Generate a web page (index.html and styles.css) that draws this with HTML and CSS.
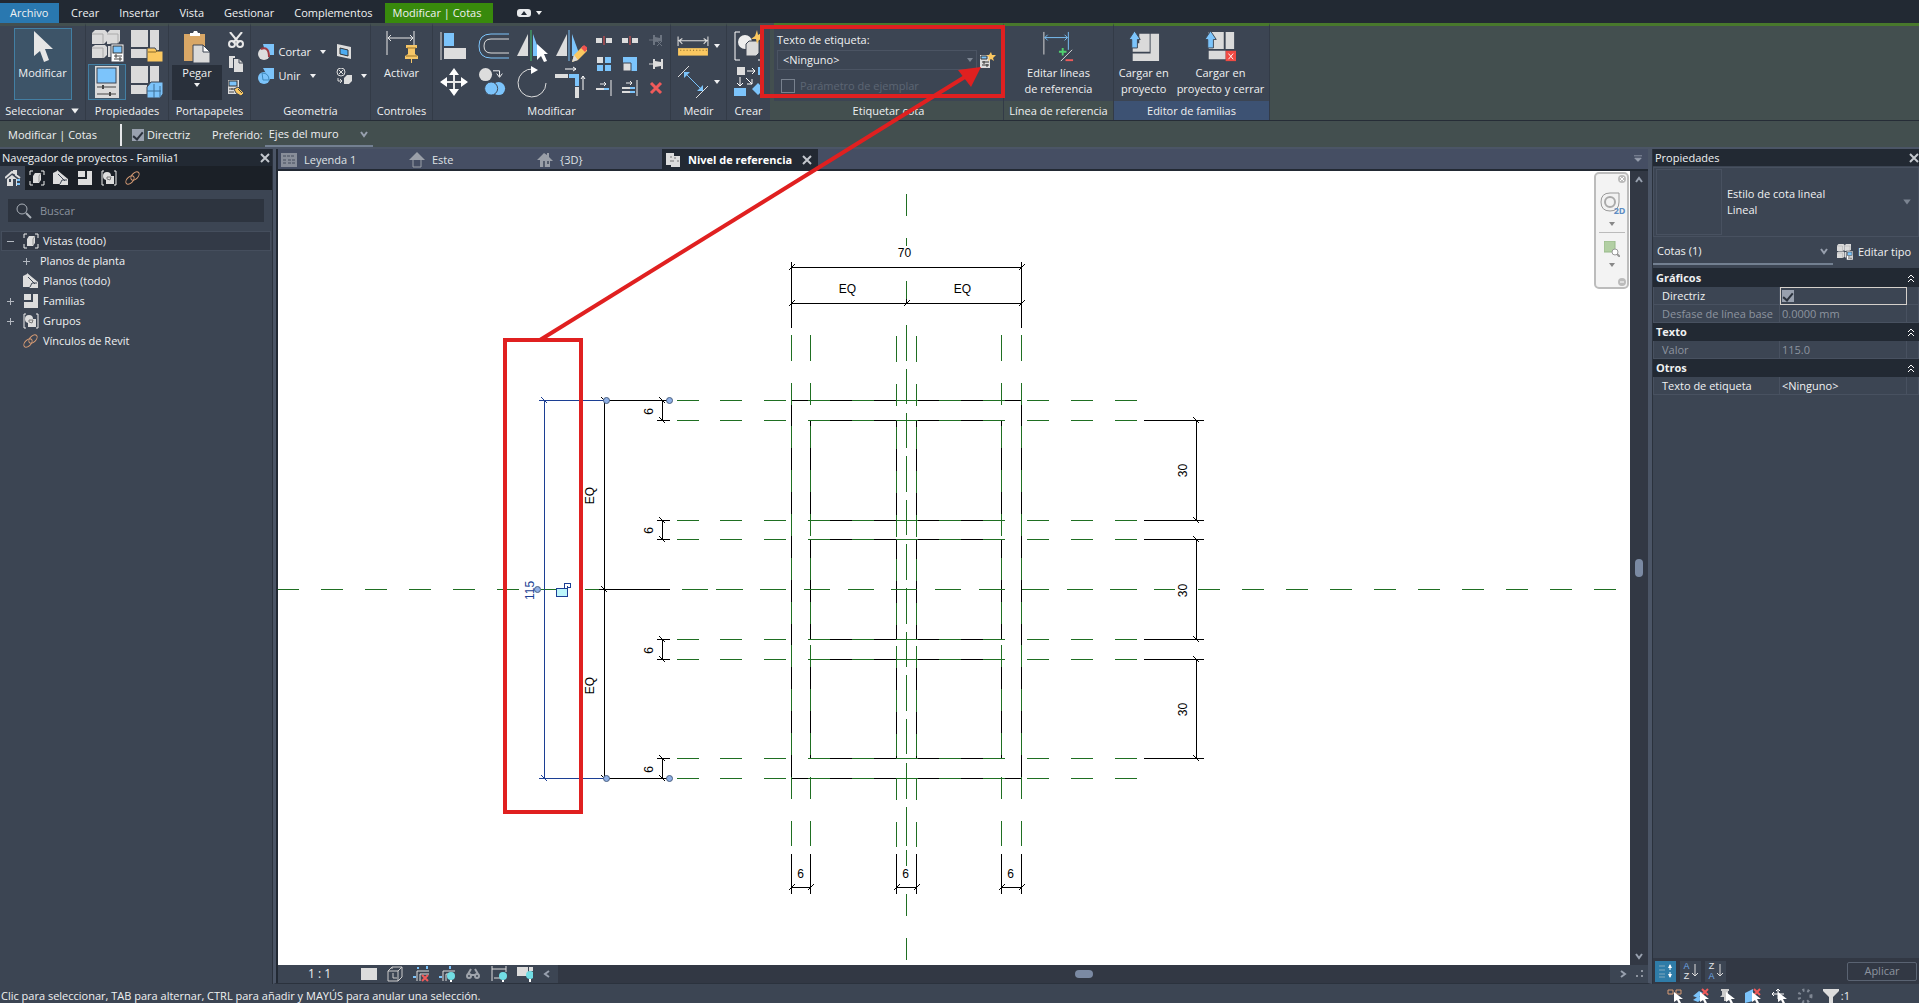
FILE: index.html
```html
<!DOCTYPE html>
<html lang="es">
<head>
<meta charset="utf-8">
<title>Nivel de referencia - Familia1</title>
<link rel="stylesheet" href="styles.css">
</head>
<body>
<svg class="sprite" aria-hidden="true">
  <symbol id="cursor" viewBox="0 0 20 32"><path d="M1 0V25L7 20L11 31L16 29L12 18H20Z" fill="#e6e6e6"/></symbol>
  <symbol id="typeprops" viewBox="0 0 32 32"><g fill="#dadada"><path d="M0 3L3 0H13L15 2V11L12 14H0Z"/><path d="M15 3L18 0H28V11L25 14H15Z"/><path d="M0 17L3 15H13L15 17V25L12 28H0Z"/><path d="M16 16h3v11h-3z"/></g><path d="M0 4h11v10M15 4h11v10M0 18h11v10" stroke="#aaa" fill="none"/><rect x="19" y="14" width="13" height="18" fill="#fff" stroke="#3c4553"/><rect x="21" y="16" width="9" height="7" fill="#7cc4fb" stroke="#333"/><path d="M22 26h8M22 29h8M24 24v4M28 27v4" stroke="#444"/></symbol>
  <symbol id="family" viewBox="0 0 32 32"><path d="M0 0H17V17H0ZM19 0H28V20H19ZM0 19H17V28H0Z" fill="#dadada"/><path d="M16 18H24L26 21H32V32H16Z" fill="#fbc860" stroke="#3c4553"/><path d="M17 22h8l2-2" stroke="#8a6a28" fill="none"/></symbol>
  <symbol id="category" viewBox="0 0 32 32"><path d="M0 0H17V17H0ZM19 0H28V16H19ZM0 19H16V28H0Z" fill="#dadada"/><path d="M16 21L20 16H32V28L29 32H16Z" fill="#7cc4fb" stroke="#3c4553"/><path d="M16 25h14M23 18v14M29 20v11" stroke="#3c6e96"/></symbol>
  <symbol id="props" viewBox="0 0 26 32"><rect x="1" width="24" height="32" fill="#dadada"/><rect x="3" y="2" width="19" height="15" fill="#7cc4fb" stroke="#3c4553"/><path d="M3 21h19M3 28h19" stroke="#444"/><path d="M9 19v4M16 26v4" stroke="#444" stroke-width="2"/></symbol>
  <symbol id="paste" viewBox="0 0 28 32"><path d="M1 3H22V30H1Z" fill="#d9a766"/><path d="M7 5V2H10L11 0H14L15 2H17V5Z" fill="#fff"/><path d="M10 14H20L27 21V32H10Z" fill="#dadada" stroke="#3c4553"/><path d="M20 14V21H27Z" fill="#fff" stroke="#3c4553"/></symbol>
  <symbol id="cut" viewBox="0 0 16 16"><path d="M2 0L11 11M14 0L5 11" stroke="#e8e8e8" stroke-width="2"/><g fill="none" stroke="#e8e8e8" stroke-width="2"><circle cx="4" cy="12" r="3"/><circle cx="12" cy="12" r="3"/></g></symbol>
  <symbol id="copyclip" viewBox="0 0 16 16"><path d="M1 0h6v2H5v10H1z" fill="#ddd"/><path d="M6 3h5l4 4v9H6z" fill="#ddd"/><path d="M11 3v4h4" fill="none" stroke="#3c4553"/></symbol>
  <symbol id="matchtype" viewBox="0 0 16 16"><rect width="11" height="14" fill="#ddd"/><rect x="1" y="1" width="8" height="5" fill="#7cc4fb" stroke="#333"/><path d="M1 9h8M1 12h5M4 8v2" stroke="#444"/><path d="M6 9l4-2 6 6-3 3-5-3z" fill="#fbc860" stroke="#3c4553"/><path d="M10 9l4 4" stroke="#444"/></symbol>
  <symbol id="cutgeo" viewBox="0 0 16 16"><path d="M5 0h11v11h-8z" fill="#7cc4fb"/><circle cx="6" cy="10" r="6" fill="#ddd"/><path d="M3 5q8-3 8 8" fill="none" stroke="#9c3a42" stroke-width="2"/></symbol>
  <symbol id="joingeo" viewBox="0 0 16 16"><path d="M5 0h11v11h-5z" fill="#7cc4fb"/><circle cx="6" cy="10" r="6" fill="#7cc4fb"/><path d="M4 5q7 0 7 7H5z" fill="none" stroke="#3e89bc"/></symbol>
  <symbol id="wall" viewBox="0 0 16 16"><path d="M1 0l14 3v12L1 12z" fill="#ddd"/><path d="M4 4l8 2v6l-8-2z" fill="#4dabf0" stroke="#333"/></symbol>
  <symbol id="demolish" viewBox="0 0 16 16"><circle cx="5" cy="4" r="4" fill="none" stroke="#ddd"/><path d="M3 2l4 4M7 2l-4 4" stroke="#ddd"/><path d="M8 10l3-3h5v6l-3 3H8z" fill="#ddd"/><path d="M2 10v3h4M4 11l2 2-2 2" stroke="#ddd" fill="none"/></symbol>
  <symbol id="activate" viewBox="0 0 32 32"><path d="M1 0V24M28 0V14M2 7H27M5 4L2 7L5 10M24 4L27 7L24 10" stroke="#e8e8e8" fill="none"/><path d="M20 14h11v3h-2v6l3 2v3H19v-3l3-2v-6h-2zM25 28h1v4h-1z" fill="#f6c667"/><path d="M21 17h9M20 25h11" stroke="#9b752c"/></symbol>
  <symbol id="align" viewBox="0 0 28 28"><path d="M1 0v28" stroke="#ddd"/><path d="M4 1h10v13H4z" fill="#7cc4fb"/><path d="M4 16h22v11H4z" fill="#ddd"/></symbol>
  <symbol id="offset" viewBox="0 0 32 28"><path d="M32 2H14q-12 0-12 12t12 12H32" fill="none" stroke="#7cc4fb"/><path d="M32 7H14q-7 0-7 7t7 7H32" fill="none" stroke="#ddd" stroke-width="1"/></symbol>
  <symbol id="mirror1" viewBox="0 0 32 32"><path d="M12 4v22H1z" fill="#ddd"/><path d="M17 4l8 22h-8z" fill="#7cc4fb"/><path d="M15 0v31" stroke="#45c16d" stroke-width="1"/><path d="M21 14v16l4-4 3 6 3-1-3-7h4z" fill="#fff"/></symbol>
  <symbol id="mirror2" viewBox="0 0 32 32"><path d="M12 4v22H1z" fill="#ddd"/><path d="M17 4l8 22h-8z" fill="#7cc4fb"/><path d="M14 0v31" stroke="#7cc4fb"/><path d="M17 32l2-7 9-9 5 4-10 10z" fill="#fbc860"/><path d="M17 32l2-7 4 5z" fill="#ddd"/><path d="M26 18l3-3 4 3-3 4z" fill="#ef5350"/></symbol>
  <symbol id="move" viewBox="0 0 28 28"><path d="M14 2v24M2 14h24" stroke="#e8e8e8" stroke-width="2"/><path d="M14 0l5 7H9zM14 28l5-7H9zM0 14l7-5v10zM28 14l-7-5v10z" fill="#fff"/></symbol>
  <symbol id="copy" viewBox="0 0 30 30"><circle cx="7" cy="7" r="7" fill="#ddd"/><path d="M15 3h7v6M19 6l3 4 3-4" stroke="#fff" fill="none"/><circle cx="21" cy="22" r="7" fill="#7cc4fb"/><circle cx="13" cy="22" r="7" fill="#7cc4fb" stroke="#3c4553"/></symbol>
  <symbol id="rotate" viewBox="0 0 30 32"><path d="M16 3A14 14 0 1 0 29 17" fill="none" stroke="#ddd"/><path d="M14 0l7 4-7 4z" fill="#fff"/></symbol>
  <symbol id="trim" viewBox="0 0 32 32"><path d="M0 8h13v4H0z" fill="#ddd"/><path d="M14 8h10v12h-4v-8h-6z" fill="#7cc4fb"/><path d="M20 21h4v11h-4z" fill="#ddd"/><path d="M10 3h11M18 1l3 2-3 2M28 24V10M26 13l2-3 2 3" stroke="#fff" fill="none"/></symbol>
  <symbol id="split" viewBox="0 0 16 16"><path d="M0 6h6v5H0zM10 6h6v5h-6z" fill="#ddd"/><path d="M8 4v9" stroke="#ef5350"/></symbol>
  <symbol id="pinoff" viewBox="0 0 16 16"><path d="M1 8h4" stroke="#6c7480"/><path d="M5 3h2v2l5 1V3h2v6l-7 1v3H5z" fill="#6c7480"/><path d="M9 9l5 5M14 9l-5 5" stroke="#6c7480"/></symbol>
  <symbol id="array" viewBox="0 0 16 16"><path d="M1 1h6v6H1z" fill="#ddd"/><path d="M9 1h6v6H9zM1 9h6v6H1zM9 9h6v6H9z" fill="#7cc4fb"/></symbol>
  <symbol id="scale" viewBox="0 0 16 16"><path d="M1 1h14v14H1z" fill="#7cc4fb"/><path d="M1 7h8v8H1z" fill="#ddd" stroke="#3c4553"/></symbol>
  <symbol id="pin" viewBox="0 0 16 16"><path d="M1 8h5" stroke="#ddd"/><path d="M5 3h2v2l6 1V3h2v10h-2v-3l-6 1v2H5z" fill="#ddd"/></symbol>
  <symbol id="trim1" viewBox="0 0 16 16"><path d="M4 4h6M8 2l2 2-2 2M15 0v16" stroke="#eee" fill="none"/><path d="M0 9h8" stroke="#ddd" stroke-width="2"/><path d="M8 9h5" stroke="#7cc4fb" stroke-width="2"/></symbol>
  <symbol id="trim2" viewBox="0 0 16 16"><path d="M4 3h6M8 1l2 2-2 2M15 0v16" stroke="#eee" fill="none"/><path d="M0 8h8M0 12h8" stroke="#ddd" stroke-width="2"/><path d="M8 8h5M8 12h5" stroke="#7cc4fb" stroke-width="2"/></symbol>
  <symbol id="delete" viewBox="0 0 16 16"><path d="M3 3l10 10M13 3L3 13" stroke="#ef5a5a" stroke-width="3"/></symbol>
  <symbol id="ruler" viewBox="0 0 30 18"><path d="M1 0v9M29 0v9M2 4h26M5 2L2 4l3 3M25 2l3 2-3 3" stroke="#ddd" fill="none"/><path d="M1 11h28v7H1z" fill="#fbc860"/><path d="M3 13h25" stroke="#8a6a28" stroke-dasharray="1 2"/></symbol>
  <symbol id="dimalign" viewBox="0 0 30 32"><path d="M0 11L11 0M18 32L30 20" stroke="#ddd"/><path d="M6 6L25 25" stroke="#7cc4fb"/><path d="M6 6v6l6-6zM25 25v-6l-6 6z" fill="#7cc4fb"/></symbol>
  <symbol id="creategroup" viewBox="0 0 30 32"><path d="M6 2H1V30H6M24 30H28V18" stroke="#fff" fill="none"/><circle cx="11" cy="12" r="7" fill="#eee"/><path d="M12 14l3-3h10v12l-3 3H12z" fill="#dadada" stroke="#3c4553"/><path d="M23 0l1 5 5-3-2 5 3 1-5 2-2 4-1-5-5 0 4-3z" fill="#fbc860"/></symbol>
  <symbol id="similar" viewBox="0 0 30 32"><path d="M3 1h8v8H3z" fill="#ddd"/><path d="M0 22h12v8H0zM24 1h6v8h-6zM24 17l6 6-6 6-6-6z" fill="#7cc4fb"/><path d="M13 5h8M18 2l3 3-3 3M6 11v9M3 17l3 3 3-3M12 12l6 6M18 13v5h-5" stroke="#fff" fill="none"/></symbol>
  <symbol id="newparam" viewBox="0 0 16 16"><path d="M0 3h10v13H0z" fill="#ddd"/><path d="M1 4h6v3H1z" fill="#7cc4fb" stroke="#333"/><path d="M2 10h7M2 13h7M4 9v3M7 12v3" stroke="#333"/><path d="M11 0l1 3 4 0-3 3 1 3-3-2-3 2 1-4-3-2h3z" fill="#fbc860"/></symbol>
  <symbol id="editref" viewBox="0 0 34 34"><path d="M2 1v24" stroke="#ddd"/><path d="M28 1v19M3 7h24M6 4L3 7l3 3M24 4l3 3-3 3" stroke="#7cc4fb" fill="none"/><path d="M18 22h8M22 18v8" stroke="#4fd16f" stroke-width="2"/><path d="M20 32L32 20" stroke="#ddd"/><path d="M25 31h8" stroke="#ef5a5a" stroke-width="2"/></symbol>
  <symbol id="load" viewBox="0 0 34 34"><path d="M12 3h11v19H5V13h7z" fill="#dadada"/><path d="M24 3h9v29H5v-8h19z" fill="#dadada"/><path d="M7 0l6 9h-3v9H4V9H1z" fill="#7cc4fb" stroke="#3c4553"/></symbol>
  <symbol id="loadclose" viewBox="0 0 34 34"><path d="M5 1h16v18H5zM23 1h9v18h-9zM5 21h18v9H5z" fill="#dadada"/><path d="M7 0l6 9h-3v9H4V9H1z" fill="#7cc4fb" stroke="#3c4553"/><path d="M23 21h11v11H23z" fill="#ef4a43"/><path d="M26 24l5 6M31 24l-5 6" stroke="#fff"/></symbol>
  <symbol id="home" viewBox="0 0 16 16"><path d="M0 8l7-6 2 1V1h2v4l4 3" fill="none" stroke="#ddd" stroke-width="2"/><path d="M2 9l5-4 5 4v7H2z" fill="#ddd"/><path d="M4 9h2v3H4zM8 9h3v7H8z" fill="#3c4553"/><path d="M12 10h3M12 14h3" stroke="#7cc4fb" stroke-width="2"/></symbol>
  <symbol id="views" viewBox="0 0 16 16"><path d="M4 1H1V5M12 1h3V5M4 15H1V11M12 15h3V11" stroke="#eee" fill="none"/><path d="M4 6l2-3h6v7l-2 3H4z" fill="#ddd"/><path d="M10 6v6M10 6l2-3" stroke="#999"/></symbol>
  <symbol id="sheets" viewBox="0 0 16 16"><path d="M0 3L4 1 9 5l1 9H0z" fill="#ddd"/><path d="M4 0l11 9v6H7L4 9z" fill="#ddd"/><path d="M5 4l7 7M7 14l2-4h5" stroke="#3c4553" fill="none"/></symbol>
  <symbol id="families" viewBox="0 0 16 16"><path d="M1 1h7v6H1zM10 1h5v14H1V9h9z" fill="#ddd"/></symbol>
  <symbol id="groups" viewBox="0 0 16 16"><path d="M3 1H1v14h2M13 1h2v14h-2" stroke="#eee" fill="none"/><circle cx="6" cy="6" r="4" fill="#ddd"/><path d="M5 6h8v8H5z" fill="#ddd"/><path d="M6 7h4l-1 3-3-1z" fill="none" stroke="#777"/></symbol>
  <symbol id="link" viewBox="0 0 16 16"><g fill="none" stroke="#d69b74"><ellipse cx="5" cy="10" rx="3" ry="5" transform="rotate(45 5 10)"/><ellipse cx="10" cy="6" rx="3" ry="5" transform="rotate(45 10 6)"/></g></symbol>
  <symbol id="search" viewBox="0 0 16 16"><circle cx="6" cy="6" r="5" fill="none" stroke="#aab0b8"/><path d="M10 10l5 5" stroke="#aab0b8" stroke-width="2"/></symbol>
  <symbol id="legend" viewBox="0 0 16 16"><path d="M0 1h16v14H0z" fill="#888e99"/><path d="M2 4h12M2 8h3M7 8h7M2 11h3M7 11h7" stroke="#444c5c" stroke-dasharray="3 1"/></symbol>
  <symbol id="elev" viewBox="0 0 16 16"><path d="M8 0l8 8H0z" fill="#9a9fa8"/><path d="M4 8v7h8V8" fill="#454e63" stroke="#9a9fa8"/></symbol>
  <symbol id="house3d" viewBox="0 0 16 16"><path d="M0 8l7-7 3 2V1h2v4l4 4h-3v6H3V8z" fill="#9a9fa8"/><path d="M6 9h2v6H6zM10 9h2v3h-2z" fill="#555d6c"/></symbol>
  <symbol id="plan" viewBox="0 0 16 16"><path d="M1 1h8v3h6v11H6v-2H1z" fill="#ddd"/><path d="M6 4v2M6 8v2M7 9h2M12 9h2M10 5v2" stroke="#777" fill="none"/></symbol>
  <symbol id="arrow" viewBox="0 0 8 8"><path d="M1 2h6L4 6z" fill="currentColor"/></symbol>
  <symbol id="close" viewBox="0 0 10 10"><path d="M1 1l8 8M9 1L1 9" stroke="currentColor" stroke-width="2"/></symbol>
  <symbol id="chev" viewBox="0 0 10 10"><path d="M2 3l3 4 3-4" stroke="currentColor" stroke-width="2" fill="none"/></symbol>
  <symbol id="double" viewBox="0 0 8 10"><path d="M1 5l3-3 3 3M1 9l3-3 3 3" stroke="#fff" fill="none"/></symbol>
  <symbol id="box3d" viewBox="0 0 16 16"><path d="M1 5h10v10H1zM1 5l4-4h10v10l-4 4M11 5l4-4M5 1v2M6 7v5h4" stroke="#ccc" fill="none"/></symbol>
  <symbol id="crop" viewBox="0 0 16 16"><path d="M4 15V5h12M7 15V8h9" stroke="#ddd" fill="none"/><path d="M5 1v2M14 0v3M0 11h3" stroke="#7cc4fb" stroke-width="2"/><path d="M9 9l6 6M15 9l-6 6" stroke="#ef5a5a" stroke-width="2"/></symbol>
  <symbol id="cropshow" viewBox="0 0 16 16"><path d="M4 15V5h12M7 15V8h3" stroke="#ddd" fill="none"/><path d="M11 0v3M0 11h3" stroke="#7cc4fb" stroke-width="2"/><circle cx="12" cy="10" r="4" fill="#72dde4"/><path d="M12 14v2" stroke="#fff" stroke-width="2"/></symbol>
  <symbol id="glasses" viewBox="0 0 16 16"><g fill="none" stroke="#9fa4ac" stroke-width="2"><circle cx="4" cy="10" r="2"/><circle cx="12" cy="10" r="2"/><path d="M3 8l3-5M13 8l-3-5M6 9h4"/></g></symbol>
  <symbol id="dimvis" viewBox="0 0 16 16"><path d="M1 0v15M15 0v6M1 3h14M3 12h6" stroke="#ddd"/><circle cx="12" cy="10" r="4" fill="#72dde4"/><path d="M12 14v2" stroke="#fff" stroke-width="2"/></symbol>
  <symbol id="preview" viewBox="0 0 16 16"><path d="M0 1h11v9H0zM12 1h4v4h-4z" fill="#ddd"/><circle cx="13" cy="9" r="4" fill="#72dde4"/><path d="M13 13v3" stroke="#fff" stroke-width="2"/></symbol>
  <symbol id="group" viewBox="0 0 16 16"><path d="M1 3h6M1 7h6M1 11h6M1 14h6" stroke="#82a8bd"/><path d="M12 2v5M12 9v5" stroke="#fff"/><path d="M10 5l2-4 2 4zM10 11l2 4 2-4z" fill="#fff"/></symbol>
  <symbol id="down" viewBox="0 0 6 14"><path d="M3 0v12M0 9l3 3 3-3" stroke="#ddd" fill="none"/></symbol>
  <symbol id="ptr" viewBox="0 0 16 16"><path d="M7 4v10l3-2 2 4 2-1-2-4h4z" fill="#fff"/></symbol>
  <symbol id="s1" viewBox="0 0 16 16"><path d="M1 2h5v4H1zM9 2h5v4H9z" fill="none" stroke="#d69b74"/><use href="#ptr"/></symbol>
  <symbol id="s2" viewBox="0 0 16 16"><path d="M0 8l6-5 4 2-5 5zM0 12l6-4 3 3-4 3z" fill="#7cc4fb"/><path d="M9 1l6 6M15 1L9 7" stroke="#ef5a5a" stroke-width="2"/><use href="#ptr"/></symbol>
  <symbol id="s3" viewBox="0 0 16 16"><path d="M2 1h8v2H9v4l2 2H1l2-2V3H2zM5 9h2v4H5z" fill="#ccc"/><use href="#ptr"/></symbol>
  <symbol id="s4" viewBox="0 0 16 16"><path d="M0 5l8-4v12l-8 2z" fill="#7cc4fb"/><path d="M9 1l6 6M15 1L9 7" stroke="#ef5a5a" stroke-width="2"/><use href="#ptr"/></symbol>
  <symbol id="s5" viewBox="0 0 16 16"><path d="M7 1v10M1 6h12M5 3l2-2 2 2M3 4L1 6l2 2" stroke="#fff" fill="none"/><use href="#ptr"/></symbol>
  <symbol id="s6" viewBox="0 0 16 16"><circle cx="8" cy="8" r="6" fill="none" stroke="#7f8793" stroke-width="3" stroke-dasharray="2 3"/></symbol>
  <symbol id="s7" viewBox="0 0 16 16"><path d="M0 1h16v2l-6 6v7H6V9L0 3z" fill="#ddd"/></symbol>
</svg>

<nav class="menubar">
  <a class="file" href="#">Archivo</a><a href="#">Crear</a><a href="#">Insertar</a><a href="#">Vista</a><a href="#">Gestionar</a><a href="#">Complementos</a><a class="context" href="#">Modificar | Cotas</a>
  <button class="minimize" aria-label="Minimizar cinta"><span class="pill"><svg viewBox="0 0 8 8"><path d="M1 6h6L4 2z" fill="#222933"/></svg></span><svg class="car"><use href="#arrow"/></svg></button>
</nav>

<header class="ribbon">
  <section class="panel p-select">
    <div class="body"><button class="big on"><svg class="i20"><use href="#cursor"/></svg><span>Modificar</span></button></div>
    <h2>Seleccionar <svg class="car wide"><use href="#arrow"/></svg></h2>
  </section>
  <section class="panel p-props">
    <div class="body quad">
      <button aria-label="Propiedades de tipo"><svg class="i32"><use href="#typeprops"/></svg></button>
      <button aria-label="Categoría y parámetros"><svg class="i32"><use href="#family"/></svg></button>
      <button class="on" aria-label="Propiedades"><svg class="i32"><use href="#props"/></svg></button>
      <button aria-label="Tipos de familia"><svg class="i32"><use href="#category"/></svg></button>
    </div>
    <h2>Propiedades</h2>
  </section>
  <section class="panel p-clip">
    <div class="body row">
      <button class="big paste"><svg class="i32"><use href="#paste"/></svg><span>Pegar<svg class="car"><use href="#arrow"/></svg></span></button>
      <div class="stack">
        <button aria-label="Cortar al portapapeles"><svg class="i16"><use href="#cut"/></svg></button>
        <button aria-label="Copiar al portapapeles"><svg class="i16"><use href="#copyclip"/></svg></button>
        <button aria-label="Igualar tipo"><svg class="i16"><use href="#matchtype"/></svg></button>
      </div>
    </div>
    <h2>Portapapeles</h2>
  </section>
  <section class="panel p-geo">
    <div class="body geo">
      <button><svg class="i16"><use href="#cutgeo"/></svg>Cortar<svg class="car"><use href="#arrow"/></svg></button>
      <button aria-label="Muro"><svg class="i16"><use href="#wall"/></svg></button>
      <button><svg class="i16"><use href="#joingeo"/></svg>Unir<svg class="car"><use href="#arrow"/></svg></button>
      <button aria-label="Derribar"><svg class="i16"><use href="#demolish"/></svg><svg class="car"><use href="#arrow"/></svg></button>
    </div>
    <h2>Geometría</h2>
  </section>
  <section class="panel p-ctrl">
    <div class="body"><button class="big"><svg class="i32"><use href="#activate"/></svg><span>Activar</span></button></div>
    <h2>Controles</h2>
  </section>
  <section class="panel p-mod">
    <div class="body row">
      <div class="tools">
        <button aria-label="Alinear"><svg class="i28"><use href="#align"/></svg></button>
        <button aria-label="Desfase"><svg class="i32"><use href="#offset"/></svg></button>
        <button aria-label="Reflejar por eje"><svg class="i32"><use href="#mirror1"/></svg></button>
        <button aria-label="Reflejar dibujando eje"><svg class="i32"><use href="#mirror2"/></svg></button>
        <button aria-label="Mover"><svg class="i28"><use href="#move"/></svg></button>
        <button aria-label="Copiar"><svg class="i28"><use href="#copy"/></svg></button>
        <button aria-label="Rotar"><svg class="i32"><use href="#rotate"/></svg></button>
        <button aria-label="Recortar esquina"><svg class="i32"><use href="#trim"/></svg></button>
      </div>
      <div class="minis">
        <button aria-label="Dividir elemento"><svg class="i16"><use href="#split"/></svg></button>
        <button aria-label="Dividir con hueco"><svg class="i16"><use href="#split"/></svg></button>
        <button aria-label="Desbloquear"><svg class="i16"><use href="#pinoff"/></svg></button>
        <button aria-label="Matriz"><svg class="i16"><use href="#array"/></svg></button>
        <button aria-label="Escala"><svg class="i16"><use href="#scale"/></svg></button>
        <button aria-label="Bloquear"><svg class="i16"><use href="#pin"/></svg></button>
        <button aria-label="Recortar un elemento"><svg class="i16"><use href="#trim1"/></svg></button>
        <button aria-label="Recortar varios"><svg class="i16"><use href="#trim2"/></svg></button>
        <button aria-label="Suprimir"><svg class="i16"><use href="#delete"/></svg></button>
      </div>
    </div>
    <h2>Modificar</h2>
  </section>
  <section class="panel p-meas">
    <div class="body two">
      <button aria-label="Medir"><svg class="i32"><use href="#ruler"/></svg><svg class="car"><use href="#arrow"/></svg></button>
      <button aria-label="Cota alineada"><svg class="i32"><use href="#dimalign"/></svg><svg class="car"><use href="#arrow"/></svg></button>
    </div>
    <h2>Medir</h2>
  </section>
  <section class="panel p-create">
    <div class="body two">
      <button aria-label="Crear grupo"><svg class="i32"><use href="#creategroup"/></svg></button>
      <button aria-label="Crear similar"><svg class="i32"><use href="#similar"/></svg></button>
    </div>
    <h2>Crear</h2>
  </section>
  <section class="panel p-label ctx">
    <div class="body labelform">
      <label for="lbl">Texto de etiqueta:</label>
      <div class="combo"><span class="sel"><select id="lbl"><option>&lt;Ninguno&gt;</option></select><svg class="car"><use href="#arrow"/></svg></span><button aria-label="Crear parámetro"><svg class="i16"><use href="#newparam"/></svg></button></div>
      <label class="inst"><input type="checkbox" disabled>Parámetro de ejemplar</label>
    </div>
    <h2>Etiquetar cota</h2>
  </section>
  <section class="panel p-ref ctx">
    <div class="body"><button class="big"><svg class="i34"><use href="#editref"/></svg><span>Editar líneas<br>de referencia</span></button></div>
    <h2>Línea de referencia</h2>
  </section>
  <section class="panel p-fam">
    <div class="body row">
      <button class="big"><svg class="i34"><use href="#load"/></svg><span>Cargar en<br>proyecto</span></button>
      <button class="big"><svg class="i34"><use href="#loadclose"/></svg><span>Cargar en<br>proyecto y cerrar</span></button>
    </div>
    <h2>Editor de familias</h2>
  </section>
  <div class="rest"></div>
</header>

<div class="options">
  <span class="mode">Modificar | Cotas</span>
  <label><input type="checkbox" checked>Directriz</label>
  <label class="pref" for="pref">Preferido:</label>
  <span class="under"><select id="pref"><option>Ejes del muro</option></select><svg class="chev"><use href="#chev"/></svg></span>
</div>

<main>
  <aside class="browser">
    <div class="title">Navegador de proyectos - Familia1<button aria-label="Cerrar navegador"><svg class="x"><use href="#close"/></svg></button></div>
    <div class="btabs">
      <button class="cur" aria-label="Inicio"><svg class="i16"><use href="#home"/></svg></button>
      <button aria-label="Vistas"><svg class="i16"><use href="#views"/></svg></button>
      <button aria-label="Planos"><svg class="i16"><use href="#sheets"/></svg></button>
      <button aria-label="Familias"><svg class="i16"><use href="#families"/></svg></button>
      <button aria-label="Grupos"><svg class="i16"><use href="#groups"/></svg></button>
      <button aria-label="Vínculos"><svg class="i16"><use href="#link"/></svg></button>
    </div>
    <div class="search"><svg class="i16"><use href="#search"/></svg><input type="text" placeholder="Buscar" aria-label="Buscar"></div>
    <ul class="tree">
      <li class="hl"><i class="minus"></i><svg class="i16"><use href="#views"/></svg>Vistas (todo)</li>
      <li class="child"><i class="plus"></i>Planos de planta</li>
      <li><i></i><svg class="i16"><use href="#sheets"/></svg>Planos (todo)</li>
      <li><i class="plus"></i><svg class="i16"><use href="#families"/></svg>Familias</li>
      <li><i class="plus"></i><svg class="i16"><use href="#groups"/></svg>Grupos</li>
      <li><i></i><svg class="i16"><use href="#link"/></svg>Vínculos de Revit</li>
    </ul>
  </aside>

  <section class="work">
    <div class="dtabs">
      <a href="#"><svg class="i16"><use href="#legend"/></svg>Leyenda 1</a>
      <a href="#"><svg class="i16"><use href="#elev"/></svg>Este</a>
      <a href="#"><svg class="i16"><use href="#house3d"/></svg>{3D}</a>
      <a href="#" class="cur"><svg class="i16"><use href="#plan"/></svg>Nivel de referencia<svg class="x"><use href="#close"/></svg></a>
      <button aria-label="Lista de vistas"><svg viewBox="0 0 10 10"><path d="M0 1h10M1 4h8L5 8z" fill="#98a0ae" stroke="#98a0ae" stroke-width="1"/></svg></button>
    </div>
    <div class="canvas">
      <svg class="drawing" viewBox="277.5 170.5 1352 794" preserveAspectRatio="xMidYMid meet">
        <g class="k">
          <path d="M791 400H1021V778H791Z"/>
          <path d="M810 420H896V520H810ZM916 420H1001V520H916ZM810 539H896V639H810ZM916 539H1001V639H916ZM810 659H896V758H810ZM916 659H1001V758H916Z"/>
        </g>
        <g class="g">
          <path d="M791 334V360M810 334V360M896 335V361M916 335V361M1001 334V360M1021 334V360M791 820V845M810 820V845M896 821V846M916 821V846M1001 820V845M1021 820V845"/>
          <path class="dash" d="M791 382V798M810 382V798M896 383V799M916 383V799M1001 382V798M1021 382V798"/>
          <path class="dash" d="M676 400H1136M676 420H1136M676 520H1136M676 539H1136M676 639H1136M676 659H1136M676 758H1136M676 778H1136"/>
          <path d="M906 193V215M906 237V245M906 280V298M906 324V360M906 368V403M906 412V447M906 455V491M906 499V534M906 543V579M906 587V623M906 631V666M906 674V710M906 718V753M906 762V798M906 806V845M906 849V865M906 893V915M906 937V959"/>
          <path class="dash44" d="M276 589H520"/>
          <path d="M540 589H557M584 589H598M681 589H707M715 589H742M759 589H785M803 589H829M847 589H873M890 589H916M934 589H960M978 589H1004M1021 589H1048M1066 589H1092M1109 589H1136M1153 589H1174"/>
          <path class="dash44" d="M1197 589H1616"/>
        </g>
        <g class="k">
          <path d="M791 267H1021M791 303H1021M791 261V327M1021 261V327M906 298V303"/>
          <path d="M604 400V778M604 400H669M598 589H669M604 778H669"/>
          <path d="M662 400V420M656 420H669M662 520V539M656 520H669M656 539H669M662 639V659M656 639H669M656 659H669M662 758V778M656 758H669"/>
          <path d="M1196 420V520M1143 420H1203M1143 520H1203M1196 539V639M1143 539H1203M1143 639H1203M1196 659V758M1143 659H1203M1143 758H1203"/>
          <path d="M791 853V893M810 853V893M791 887H810M896 853V893M916 853V893M896 887H916M1001 853V893M1021 853V893M1001 887H1021"/>
          <path d="M788 270L794 264M1018 270L1024 264M788 306L794 300M903 306L909 300M1018 306L1024 300M788 890L794 884M807 890L813 884M893 890L899 884M913 890L919 884M998 890L1004 884M1018 890L1024 884"/>
          <path d="M601 397L607 403M601 586L607 592M601 775L607 781M659 397L665 403M659 417L665 423M659 517L665 523M659 536L665 542M659 636L665 642M659 656L665 662M659 755L665 761M659 775L665 781M1193 417L1199 423M1193 517L1199 523M1193 536L1199 542M1193 636L1199 642M1193 656L1199 662M1193 755L1199 761"/>
        </g>
        <g class="b"><path d="M544 400V778M538 400H604M538 778H604M541 397L547 403M541 775L547 781"/><path class="lock" d="M556 588H567V596H556Z"/><path d="M564 587V583H570V587H567V585"/></g>
        <g class="grip"><circle cx="606" cy="400" r="3"/><circle cx="669" cy="400" r="3"/><circle cx="606" cy="778" r="3"/><circle cx="669" cy="778" r="3"/><circle cx="537" cy="589" r="3"/></g>
        <g class="t">
          <text x="904" y="256">70</text><text x="847" y="292">EQ</text><text x="962" y="292">EQ</text>
          <text x="800" y="877">6</text><text x="905" y="877">6</text><text x="1010" y="877">6</text>
          <text transform="translate(593 495) rotate(-90)">EQ</text><text transform="translate(593 685) rotate(-90)">EQ</text>
          <text transform="translate(652 411) rotate(-90)">6</text><text transform="translate(652 530) rotate(-90)">6</text><text transform="translate(652 650) rotate(-90)">6</text><text transform="translate(652 769) rotate(-90)">6</text>
          <text transform="translate(1186 470) rotate(-90)">30</text><text transform="translate(1186 590) rotate(-90)">30</text><text transform="translate(1186 709) rotate(-90)">30</text>
          <text class="bt" transform="translate(533 590) rotate(-90)">115</text>
        </g>
      </svg>
      <div class="navbar">
        <svg class="i10" viewBox="0 0 10 10"><circle cx="5" cy="5" r="4" fill="#bbb"/><path d="M3 3l4 4M7 3L3 7" stroke="#fff"/></svg>
        <button aria-label="Rueda de navegación"><svg class="wheel" viewBox="0 0 24 24"><path d="M1 10Q1 1 10 1h9v9q0 9-9 9T1 10z" fill="#f2f2f2" stroke="#999"/><circle cx="10" cy="10" r="5" fill="none" stroke="#aaa" stroke-width="2"/></svg><b>2D</b></button>
        <svg class="car"><use href="#arrow"/></svg>
        <hr>
        <button aria-label="Zoom de región"><svg class="i16" viewBox="0 0 16 16"><path d="M0 0h11v11H0z" fill="#b2cfa3" stroke="#98b98a"/><circle cx="11" cy="11" r="3" fill="#fff" stroke="#999"/><path d="M13 13l3 3" stroke="#999" stroke-width="2"/></svg></button>
        <svg class="car"><use href="#arrow"/></svg>
        <svg class="i10 last" viewBox="0 0 10 10"><circle cx="5" cy="5" r="4" fill="#bbb"/><path d="M3 5h4" stroke="#fff"/></svg>
      </div>
    </div>
    <div class="vscroll"><svg class="chev up"><use href="#chev"/></svg><span class="thumb"></span><svg class="chev"><use href="#chev"/></svg></div>
    <div class="viewbar">
      <span class="scaletxt">1 : 1</span>
      <button aria-label="Nivel de detalle"><span class="fine"></span></button>
      <button aria-label="Estilo visual"><svg class="i16"><use href="#box3d"/></svg></button>
      <button aria-label="Recortar vista"><svg class="i16"><use href="#crop"/></svg></button>
      <button aria-label="Mostrar región"><svg class="i16"><use href="#cropshow"/></svg></button>
      <button aria-label="Ocultar temporalmente"><svg class="i16"><use href="#glasses"/></svg></button>
      <button aria-label="Restricciones"><svg class="i16"><use href="#dimvis"/></svg></button>
      <button aria-label="Vista previa"><svg class="i16"><use href="#preview"/></svg></button>
      <svg class="chev left"><use href="#chev"/></svg>
      <div class="hscroll"><span class="thumb"></span></div>
      <svg class="chev right"><use href="#chev"/></svg>
      <svg class="resize" viewBox="0 0 10 10"><path d="M7 1h2v2H7zM2 6h2v2H2zM7 6h2v2H7z" fill="#8d949f"/></svg>
    </div>
  </section>

  <aside class="props">
    <div class="title">Propiedades<button aria-label="Cerrar propiedades"><svg class="x"><use href="#close"/></svg></button></div>
    <div class="type"><span class="thumbnail"></span><p>Estilo de cota lineal<br>Lineal</p><svg class="car wide"><use href="#arrow"/></svg></div>
    <div class="filter">
      <span class="under"><select aria-label="Filtro de selección"><option>Cotas (1)</option></select><svg class="chev"><use href="#chev"/></svg></span>
      <button><svg class="i16"><use href="#typeprops"/></svg>Editar tipo</button>
    </div>
    <table>
      <colgroup><col><col class="c2"><col class="c3"></colgroup>
      <tr class="hd"><th colspan="2">Gráficos</th><th><svg class="dbl"><use href="#double"/></svg></th></tr>
      <tr><td><label for="dir">Directriz</label></td><td class="foc"><input id="dir" type="checkbox" checked></td><td></td></tr>
      <tr class="ro"><td>Desfase de línea base</td><td>0.0000 mm</td><td></td></tr>
      <tr class="hd"><th colspan="2">Texto</th><th><svg class="dbl"><use href="#double"/></svg></th></tr>
      <tr class="ro"><td>Valor</td><td>115.0</td><td></td></tr>
      <tr class="hd"><th colspan="2">Otros</th><th><svg class="dbl"><use href="#double"/></svg></th></tr>
      <tr><td>Texto de etiqueta</td><td>&lt;Ninguno&gt;</td><td></td></tr>
    </table>
    <div class="foot">
      <button class="cur" aria-label="Agrupar"><svg class="i16"><use href="#group"/></svg></button>
      <button aria-label="Orden ascendente"><span><em>A</em><em class="w">Z</em></span><svg class="dn"><use href="#down"/></svg></button>
      <button aria-label="Orden descendente"><span><em class="w">Z</em><em>A</em></span><svg class="dn"><use href="#down"/></svg></button>
      <button class="apply" disabled>Aplicar</button>
    </div>
  </aside>
</main>

<footer>
  <span>Clic para seleccionar, TAB para alternar, CTRL para añadir y MAYÚS para anular una selección.</span>
  <div class="sicons">
    <svg class="i16"><use href="#s1"/></svg><svg class="i16"><use href="#s2"/></svg><svg class="i16"><use href="#s3"/></svg><svg class="i16"><use href="#s4"/></svg><svg class="i16"><use href="#s5"/></svg><svg class="i16"><use href="#s6"/></svg><svg class="i16"><use href="#s7"/></svg><span>:1</span>
  </div>
</footer>

<svg class="callout" viewBox="0 0 1919 1003" aria-hidden="true">
  <g fill="none" stroke="#e02020" stroke-width="4"><rect x="762" y="27" width="241" height="69"/><rect x="505" y="340" width="76" height="472"/><path d="M540 340L968 75"/></g>
  <path d="M981 67L958 70L971 87Z" fill="#e02020"/>
</svg>
</body>
</html>
```
FILE: styles.css
```css
* { box-sizing: border-box; }
html, body { height: 100%; }
body {
  margin: 0; display: flex; flex-direction: column; overflow: hidden; position: relative;
  background: #3c4553; color: #f0f1f2;
  font: 11px/16px "Open Sans", "Noto Sans", sans-serif;
}
.sprite { position: absolute; width: 0; height: 0; }
button, select, input { font: inherit; color: inherit; margin: 0; }
button { background: none; border: 0; padding: 0; display: flex; align-items: center; justify-content: center; }
svg { display: block; flex: none; }
.i10 { width: 10px; height: 10px; }
.i16 { width: 16px; height: 16px; }
.i20 { width: 20px; height: 32px; }
.i28 { width: 28px; height: 28px; }
.i32 { width: 32px; height: 32px; }
.i34 { width: 34px; height: 32px; }
.car { width: 8px; height: 8px; }
.car.wide { width: 10px; height: 10px; }
.chev { width: 10px; height: 10px; color: #98a0ae; }
.up { transform: rotate(180deg); }
.left { transform: rotate(90deg); }
.right { transform: rotate(-90deg); }
.x { width: 10px; height: 10px; color: #c3c7cd; }
select { appearance: none; border: 0; background: none; padding: 0; width: 100%; outline: 0; }
input[type=checkbox] { appearance: none; flex: none; width: 12px; height: 12px; background: #98a0ae; display: grid; place-items: center; }
input[type=checkbox]:checked::after { content: ""; width: 4px; height: 8px; border: solid #2b323d; border-width: 0 2px 2px 0; transform: rotate(40deg); }

/* Menu bar */
.menubar { display: flex; background: #222933; padding-top: 3px; height: 23px; flex: none; }
.menubar a { color: inherit; text-decoration: none; padding: 0 10px; line-height: 20px; white-space: nowrap; }
.menubar .file { background: #2978b0; margin-right: 2px; width: 59px; }
.menubar .context { background: #388a0c; width: 108px; margin-left: 2px; padding: 0 8px; }
.minimize { margin-left: 24px; gap: 4px; }
.pill { background: #e8eaec; border-radius: 3px; width: 14px; height: 8px; display: grid; place-items: center; }
.pill svg { width: 8px; height: 8px; }

/* Ribbon */
.ribbon { display: flex; flex: none; height: 98px; border-bottom: 1px solid #262d37; background: #434f4f; }
.panel { flex: none; display: flex; flex-direction: column; background: #3c4553; border-right: 1px solid #333b47; border-top: 3px solid #434f4f; }
.ctx, .p-fam, .rest { border-top: 3px solid #48782c; }
.rest { flex: 1; }
.panel .body { height: 75px; padding-top: 2px; display: flex; justify-content: center; }
.panel h2 { margin: 0; font-size: 11px; font-weight: 400; line-height: 18px; flex: 1; display: flex; align-items: center; justify-content: center; gap: 6px; white-space: nowrap; }
.ctx h2 { background: #434f4f; }
.p-fam h2 { background: #3d5273; }
.p-select { width: 86px; } .p-props { width: 83px; } .p-clip { width: 82px; } .p-geo { width: 120px; }
.p-ctrl { width: 62px; } .p-mod { width: 238px; } .p-meas { width: 56px; } .p-create { width: 47px; border-right: 4px solid #434f4f; }
.p-label { width: 230px; } .p-ref { width: 110px; } .p-fam { width: 156px; }
.big { flex-direction: column; justify-content: flex-start; padding-top: 3px; line-height: 16px; gap: 2px; white-space: nowrap; height: 72px; }
.on { background: #3d5468; outline: 1px solid #437fa3; outline-offset: -1px; }
.p-select .big { width: 58px; }
.panel .quad { display: grid; grid-template: 36px 36px / 39px 39px; justify-content: center; }
.quad .on { width: 38px; }
.paste { width: 50px; }
.paste span { background: #29303b; flex: 1; width: 50px; display: flex; flex-direction: column; align-items: center; }
.p-clip .body { justify-content: flex-start; padding-left: 3px; }
.stack { display: flex; flex-direction: column; justify-content: space-around; height: 72px; padding-left: 6px; }
.panel .geo { display: grid; grid-template: 24px 24px / 78px 28px; align-content: center; justify-content: center; padding: 0; }
.geo button { gap: 5px; justify-content: flex-start; }
.geo button .car { margin-left: 3px; }
.tools { display: grid; grid-template: 36px 36px / repeat(4, 39px); }
.minis { display: grid; grid-template: repeat(3, 24px) / repeat(3, 26px); }
.panel .two { display: grid; grid-template: 36px 36px / auto; justify-content: center; }
.two button { gap: 4px; }
.p-create .i32 { width: 30px; }
.panel .labelform { flex-direction: column; justify-content: flex-start; align-items: stretch; padding: 6px 3px 0; gap: 2px; }
.combo { display: flex; gap: 3px; align-items: center; }
.sel { display: flex; align-items: center; width: 200px; height: 20px; padding: 0 2px 0 5px; border: 1px solid #4b5463; }
.sel .car { color: #7b8491; }
.inst { display: flex; align-items: center; gap: 5px; padding: 6px 4px 0; color: #5c6573; }
.inst input[type=checkbox] { width: 14px; height: 14px; background: none; border: 1px solid #78818e; }
.p-fam .row { gap: 8px; }

/* Options bar */
.options { flex: none; display: flex; align-items: center; height: 28px; background: #434f4f; border-bottom: 2px solid #4b5566; padding: 1px 0 0 8px; }
.mode { width: 114px; border-right: 2px solid #e6e8ea; line-height: 22px; margin-right: 10px; }
.options label { display: flex; align-items: center; gap: 3px; }
.options .pref { margin: 0 2px 0 22px; }
.under { display: flex; align-items: center; border-bottom: 2px solid #738091; padding: 0 4px; height: 24px; }
.options .under { width: 108px; }

/* Work area */
main { flex: 1; min-height: 0; display: grid; grid-template-columns: 273px minmax(0, 1fr) 267px; }
.title { display: flex; justify-content: space-between; align-items: center; height: 17px; background: #222933; padding: 0 2px; }
.browser { border-right: 1px solid #2b323d; }
.btabs { display: flex; background: #1b2027; height: 24px; }
.btabs button { width: 24px; }
.btabs .cur { background: #3c4553; width: 25px; }
.search { display: flex; align-items: center; gap: 8px; background: #2d343f; height: 23px; margin: 9px 8px; padding: 0 8px; }
.search input { background: none; border: 0; padding: 0; min-width: 0; flex: 1; }
.search input::placeholder { color: #8b929d; }
.tree { list-style: none; margin: 0; padding: 0 1px; }
.tree li { display: flex; align-items: center; height: 20px; gap: 4px; padding-left: 4px; border: 1px solid transparent; }
.tree .hl { background: #333a47; border-color: #454e5d; }
.tree li.child { padding-left: 20px; gap: 9px; }
.tree i { width: 9px; height: 9px; margin-right: 4px; flex: none; display: grid; place-items: center; }
.tree .child i { margin: 0; }
.plus { background: linear-gradient(#b3b8c0, #b3b8c0) center / 7px 1px no-repeat, linear-gradient(#b3b8c0, #b3b8c0) center / 1px 7px no-repeat; }
.minus { background: linear-gradient(#b3b8c0, #b3b8c0) center / 7px 1px no-repeat; }

.work { display: grid; grid-template: 22px minmax(0, 1fr) 18px / minmax(0, 1fr) 18px; border: solid #4b5566; border-width: 0 4px 0 3px; padding-left: 2px; background: #222933; border-bottom: 1px solid #2b323d; }
.dtabs { grid-column: 1 / -1; display: flex; background: #454e63; border-bottom: 2px solid #222933; }
.dtabs a { display: flex; align-items: center; gap: 7px; width: 128px; padding: 1px 0 0 3px; color: #dfe2e6; text-decoration: none; }
.dtabs .cur { width: 156px; background: #222933; color: #fff; font-weight: 700; white-space: nowrap; }
.dtabs .cur .x { margin: 0 6px 0 auto; }
.dtabs button { margin-left: auto; width: 20px; }
.dtabs button svg { width: 8px; height: 8px; }
.canvas { background: #fff; position: relative; }
.drawing { width: 100%; height: 100%; }
.drawing path { fill: none; shape-rendering: crispEdges; }
.k path { stroke: #000; }
.g path { stroke: #1f6f22; }
.b path { stroke: #1c3f94; }
.b .lock { fill: #bdf6fb; }
.dash { stroke-dasharray: 22 21.8; }
.dash44 { stroke-dasharray: 22 22; }
.grip circle { fill: #8fb0e6; stroke: #4a6080; }
.t text { font: 12px "Liberation Sans", sans-serif; text-anchor: middle; fill: #000; }
.t .bt { fill: #1c3f94; }
.navbar { position: absolute; right: 1px; top: 1px; width: 35px; height: 117px; background: #f3f3f3; border: 2px solid #bcbcbc; border-radius: 5px; display: flex; flex-direction: column; align-items: center; gap: 4px; color: #888; }
.navbar .i10 { align-self: flex-end; }
.navbar .last { margin-top: auto; }
.navbar button { position: relative; margin-top: 4px; }
.navbar hr { width: 26px; border: 0; border-top: 1px solid #bbb; margin: 0; }
.wheel { width: 24px; height: 24px; }
.navbar b { position: absolute; right: -2px; bottom: 0; font-size: 9px; line-height: 10px; color: #5e8cc2; }
.vscroll { background: #323844; display: flex; flex-direction: column; justify-content: space-between; align-items: center; padding: 4px 0; }
.vscroll .thumb { width: 8px; height: 18px; }
.thumb { background: #7b8aa3; border-radius: 4px; }
.viewbar { grid-column: 1 / -1; display: flex; align-items: center; background: #3c4553; }
.scaletxt { width: 78px; padding-left: 30px; font-size: 12px; }
.viewbar button { width: 26px; }
.fine { width: 16px; height: 12px; background: #dcdcdc; }
.viewbar .left { margin: 0 6px 0 4px; }
.hscroll { flex: 1; height: 18px; background: #323844; display: flex; align-items: center; justify-content: center; }
.hscroll .thumb { width: 18px; height: 8px; }
.viewbar .right { margin: 0 6px 0 8px; }
.resize { width: 10px; height: 10px; margin-right: 4px; }

/* Properties palette */
.props { display: flex; flex-direction: column; border-left: 1px solid #2b323d; }
.props .title { padding-right: 0; }
.type { display: flex; align-items: center; gap: 5px; height: 70px; margin: 1px 0 2px; padding: 0 6px 0 2px; border: 1px solid #485160; }
.type p { margin: 0; flex: 1; }
.thumbnail { width: 66px; height: 66px; border: 1px solid #485160; }
.type .car { color: #7b8491; }
.filter { display: flex; align-items: center; gap: 4px; margin-bottom: 3px; height: 26px; }
.filter .under { width: 180px; height: 26px; }
.filter button { gap: 5px; white-space: nowrap; }
table { width: 100%; table-layout: fixed; border-collapse: collapse; }
.c2 { width: 127px; } .c3 { width: 12px; }
tr { height: 18px; }
td, th { padding: 0; height: 18px; line-height: 16px; text-align: left; white-space: nowrap; border: 1px solid #485160; }
td:first-child { padding-left: 8px; }
td + td { padding-left: 2px; }
.hd th { background: #222933; border-color: #222933; padding-left: 2px; }
.hd th + th { padding: 0; }
.dbl { width: 8px; height: 10px; }
.ro { color: #8d949f; }
td.foc { outline: 1px solid #d5d0cb; outline-offset: -1px; }
.foot { margin-top: auto; height: 26px; background: #323844; display: flex; align-items: center; gap: 4px; padding: 0 2px; }
.foot button { width: 21px; height: 21px; background: #3c4553; gap: 2px; }
.foot .cur { background: #2f7ca8; }
.foot span { display: grid; grid-template-rows: 10px 10px; }
.foot em { font: 9px/10px "Liberation Sans", sans-serif; color: #6fa8e6; }
.foot .w { color: #e6e8ea; }
.dn { width: 6px; height: 14px; }
.foot .apply { margin-left: auto; width: 70px; height: 19px; background: none; border: 1px solid #5a6372; border-radius: 2px; color: #8d949f; }

footer { flex: none; height: 19px; display: flex; justify-content: space-between; padding: 4px 69px 0 1px; white-space: nowrap; overflow: hidden; }
.sicons { display: flex; gap: 10px; }
.sicons span { margin-left: -8px; }
.callout { position: absolute; inset: 0; width: 100%; height: 100%; pointer-events: none; }
```
